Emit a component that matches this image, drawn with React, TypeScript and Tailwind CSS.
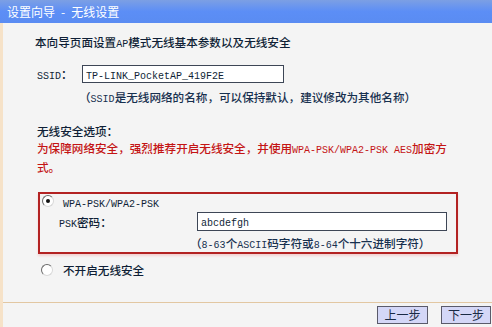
import React from "react";

const CJK = '"Noto Sans CJK SC", "Noto Sans", sans-serif';
const MONO = '"Liberation Mono", "Noto Sans CJK SC", monospace';

function M({ children }: { children: React.ReactNode }) {
  return (
    <span className="text-[10px] leading-none font-normal" style={{ fontFamily: MONO }}>
      {children}
    </span>
  );
}

function Radio({ checked }: { checked?: boolean }) {
  return (
    <span className="relative inline-block w-[12px] h-[12px] rounded-full border border-[#6a6a6a] border-b-[#d8d8d8] border-r-[#d8d8d8] bg-white shrink-0">
      {checked && (
        <span className="absolute left-[3px] top-[3px] w-[4px] h-[4px] rounded-full bg-[#111]" />
      )}
    </span>
  );
}

export default function App() {
  return (
    <div
      className="w-[492px] h-[327px] bg-[#f4f4f4] overflow-hidden flex flex-col text-[#0f1f36] text-[11.6px] font-medium"
      style={{ fontFamily: CJK }}
    >
      <div className="h-[23px] shrink-0 bg-gradient-to-b from-[#7c9fe4] via-[#5c8ef6] to-[#5a8cf2] pl-[7px] text-white text-[12px] leading-[24px] font-normal">
        设置向导<span className="mx-[6px]">-</span>无线设置
      </div>
      <div className="flex-1 flex flex-col border-l-[3px] border-[#f6e2c8]">
        <div className="pl-[32px] mt-[11px] leading-[16px]">
          本向导页面设置<M>AP</M>模式无线基本参数以及无线安全
        </div>
        <div className="flex items-center mt-[15px] pl-[34px] h-[18px]">
          <div className="w-[45px] leading-[16px]">
            <M>SSID</M>：
          </div>
          <div className="w-[202px] h-[18px] border border-[#3d4656] bg-white pl-[3px] leading-[16px]">
            <M>TP-LINK_PocketAP_419F2E</M>
          </div>
        </div>
        <div className="pl-[76px] mt-[6px] leading-[16px] text-[#17304f]">
          （<M>SSID</M>是无线网络的名称，可以保持默认，建议修改为其他名称）
        </div>
        <div className="pl-[34px] mt-[18px] leading-[16px]">无线安全选项：</div>
        <div className="pl-[34px] leading-[19px] text-[#c41414]">
          为保障网络安全，强烈推荐开启无线安全，并使用<M>WPA-PSK/WPA2-PSK AES</M>加密方
          <br />
          式。
        </div>
        <div className="ml-[35px] mt-[15px] w-[420px] h-[62px] border-2 border-[#b32222] shadow-[0_2px_2px_rgba(240,150,150,0.35)] flex flex-col">
          <div className="flex items-center h-[14px] pl-[2px] gap-[9px]">
            <Radio checked />
            <span className="leading-[14px] mt-[2px]">
              <M>WPA-PSK/WPA2-PSK</M>
            </span>
          </div>
          <div className="flex items-center mt-[4px] h-[19px] pl-[19px]">
            <div className="w-[138px] leading-[16px]">
              <M>PSK</M>密码：
            </div>
            <div className="w-[250px] h-[19px] border border-[#3d4656] bg-white pl-[3px] leading-[17px]">
              <M>abcdefgh</M>
            </div>
          </div>
          <div className="pl-[150px] mt-[5px] leading-[14px] text-[#17304f]">
            （<M>8-63</M>个<M>ASCII</M>码字符或<M>8-64</M>个十六进制字符）
          </div>
        </div>
        <div className="flex items-center h-[14px] mt-[9px] pl-[38px] gap-[10px]">
          <Radio />
          <span className="leading-[14px]">不开启无线安全</span>
        </div>
        <div className="mt-auto h-px bg-[#e2c7a2]" />
        <div className="h-[24px] flex items-start justify-end pt-[3px] pr-[1px] gap-[13px]">
          <button className="w-[51px] h-[18px] bg-[#d4d7f7] border border-[#5a5a6a] text-[12px] leading-[16px] text-[#1a2a44] font-normal">
            上一步
          </button>
          <button className="w-[50px] h-[18px] bg-[#d4d7f7] border border-[#5a5a6a] text-[12px] leading-[16px] text-[#1a2a44] font-normal">
            下一步
          </button>
        </div>
      </div>
    </div>
  );
}
